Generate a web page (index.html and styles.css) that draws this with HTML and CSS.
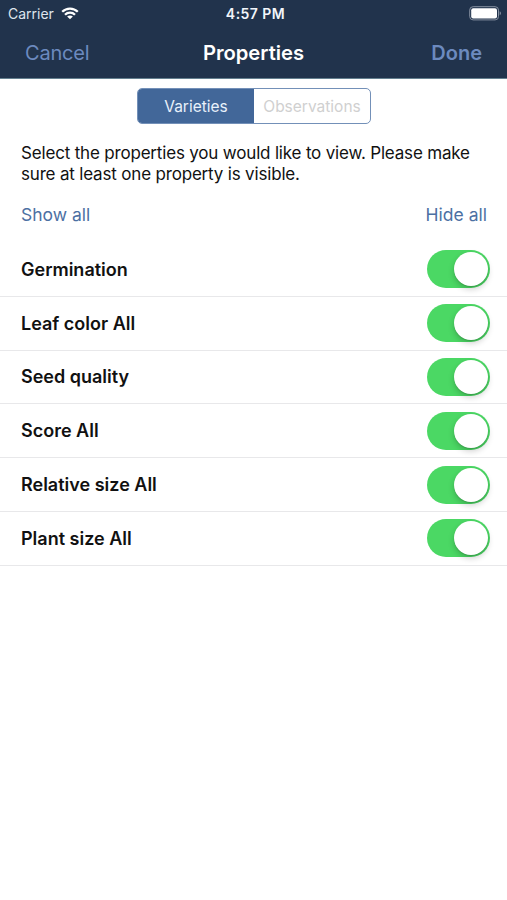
FILE: index.html
```html
<!DOCTYPE html>
<html lang="en">
<head>
<meta charset="utf-8">
<title>Properties</title>
<link rel="stylesheet" href="styles.css">
</head>
<body>
<header class="header">
  <div class="status">
    <div class="carrier"><span>Carrier</span>
      <svg class="wifi" viewBox="0 0 18 13" width="18" height="13" fill="none" stroke="#fff" stroke-width="2.3">
        <path d="M1.2 4.8C5.6.5 12.4.5 16.8 4.8"/>
        <path d="M4 7.8C6.8 5 11.2 5 14 7.8"/>
        <path d="M9 12.3 6.1 9.5C7.7 8 10.3 8 11.9 9.5Z" fill="#fff" stroke="none"/>
      </svg>
    </div>
    <time class="time">4:57 PM</time>
    <svg class="battery" viewBox="0 0 33 15" width="33" height="15">
      <rect x=".7" y=".7" width="28.8" height="13.2" rx="3.4" fill="none" stroke="#8690a0" stroke-width="1"/>
      <rect x="2.2" y="2.2" width="25.8" height="10.2" rx="2" fill="#fff"/>
      <path d="M30.7 5.3c1.7.7 1.7 3.3 0 4Z" fill="#8690a0"/>
    </svg>
  </div>
  <nav class="nav">
    <a class="cancel">Cancel</a>
    <h1 class="title">Properties</h1>
    <a class="done">Done</a>
  </nav>
</header>
<main>
  <div class="segments">
    <div class="segment selected"><span>Varieties</span></div>
    <div class="segment"><span>Observations</span></div>
  </div>
  <p class="intro"><span>Select the properties you would like to view. Please make</span><br><span>sure at least one property is visible.</span></p>
  <div class="actions"><a>Show all</a><a class="hide">Hide all</a></div>
  <ul class="list">
    <li class="row"><span>Germination</span><i class="toggle"></i></li>
    <li class="row"><span>Leaf color All</span><i class="toggle"></i></li>
    <li class="row"><span>Seed quality</span><i class="toggle"></i></li>
    <li class="row"><span>Score All</span><i class="toggle"></i></li>
    <li class="row"><span>Relative size All</span><i class="toggle"></i></li>
    <li class="row"><span>Plant size All</span><i class="toggle"></i></li>
  </ul>
</main>
</body>
</html>
```
FILE: styles.css
```css
* { box-sizing: border-box; }
body {
  margin: 0;
  background: #fff;
  color: #111;
  font-family: Inter, "Liberation Sans", sans-serif;
}
.header {
  height: 79px;
  background: #21334c;
  border-bottom: 1px solid #64808f;
}
.status {
  display: grid;
  grid-template-columns: 1fr auto 1fr;
  align-items: center;
  height: 27px;
  padding: 0 5px 0 8px;
  color: #f2f5fa;
  font-size: 14px;
}
.carrier { display: flex; align-items: center; gap: 7px; color: #dfe5ed; }
.time { padding-left: 1px; font-size: 14px; font-weight: 600; letter-spacing: .45px; }
.battery { justify-self: end; }
.nav {
  display: grid;
  grid-template-columns: 1fr auto 1fr;
  align-items: center;
  height: 51px;
  padding: 0 25px;
  font-size: 20px;
  color: #6c8abf;
}
.cancel { letter-spacing: -.2px; }
.title { margin: 0; font-size: 20.2px; font-weight: 600; color: #fff; }
.done { justify-self: end; font-weight: 600; }
.segments {
  display: flex;
  width: 234px;
  height: 36px;
  margin: 9px auto 0 137px;
  border: 1.5px solid #7390b8;
  border-radius: 5px;
  overflow: hidden;
  font-size: 15.5px;
}
.segment {
  flex: 1;
  display: flex;
  align-items: center;
  justify-content: center;
  color: #d0d0d0;
}
.selected { background: #426799; color: #e9f1fb; }
.intro { margin: 19px 0 0 21px; font-size: 17px; letter-spacing: -.18px; line-height: 20.5px; white-space: nowrap; }
.actions {
  display: flex;
  justify-content: space-between;
  margin-top: 20px;
  padding: 0 20px 0 21px;
  font-size: 17.5px;
  line-height: 22px;
  color: #4c70a3;
}
.list { margin: 17px 0 0; padding: 0; list-style: none; }
.row {
  display: flex;
  justify-content: space-between;
  align-items: center;
  height: 53.8px;
  padding: 0 17px 0 21px;
  border-bottom: 1px solid #e8e8ea;
  font-size: 18px;
  font-weight: 600;
}
.toggle {
  display: flex;
  justify-content: flex-end;
  width: 63px;
  height: 38px;
  padding: 2px;
  border-radius: 19px;
  background: #4bd864;
}
.toggle::after {
  content: "";
  width: 34px;
  height: 34px;
  border-radius: 50%;
  background: #fff;
  box-shadow: 0 3px 6px rgba(0, 0, 0, .2), 0 1px 1px rgba(0, 0, 0, .12);
}
```
